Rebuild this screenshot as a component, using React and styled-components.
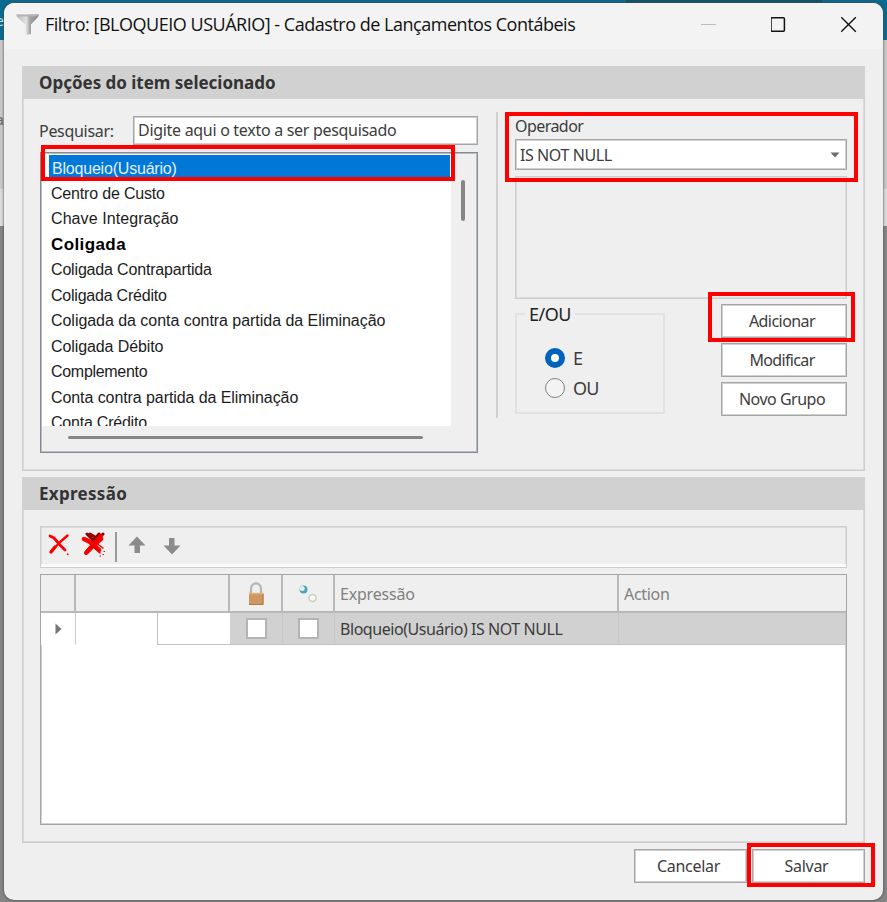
import React, { Component } from 'react'
import styled, { createGlobalStyle } from 'styled-components';


const GlobalStyle = createGlobalStyle`
    * {
        box-sizing: border-box;
    }
    body {
        margin: 0;
        overflow: hidden;
        font-family: "Noto Sans", sans-serif;
        font-size: 16px;
        color: #3c3c3c;
    }
`;

const Desktop = styled.div`
    position: relative;
    width: 887px;
    height: 902px;
    padding: 3px 4px 2px;
    overflow: hidden;
    background:
        linear-gradient(#14536c, #14536c) 626px 0 / 196px 3px no-repeat,
        linear-gradient(#0b6a90 0 40px, #c9c9c9 40px 189px, #dcdcdc 189px 226px, #858585 226px);
`;

// ends of the labels on the page behind the dialog
const BehindText = styled.span`
    position: absolute;
    right: 883px;
    top: ${props => props.$top}px;
    font-size: 15px;
    line-height: 18px;
    color: ${props => props.$color};
`;

const Window = styled.div`
    position: relative;
    width: 879px;
    height: 897px;
    border-radius: 10px;
    background: #efefef;
    box-shadow: 0 0 2px 1px rgba(70, 70, 70, 0.5);
`;

const TitleBar = styled.div`
    height: 46px;
    display: flex;
    align-items: center;
    padding: 0 26px 3px 12px;
    border-radius: 10px 10px 0 0;
    background: #f3f3f3;
`;

const Title = styled.p`
    flex: 1;
    margin: -1px 0 0 5px;
    white-space: nowrap;
    font-family: "Open Sans", sans-serif;
    font-size: 18px;
    color: #111111;
`;

const Text = styled.span`
    display: inline-block;
    white-space: nowrap;
    letter-spacing: ${props => props.$track || 0}px;
`;

const WindowControls = styled.div`
    display: flex;
    gap: 55px;
`;

const Panel = styled.div`
    width: 843px;
    height: ${props => props.$height}px;
    margin: ${props => props.$top}px 0 0 18px;
    padding: 0 1px 1px;
    border: 1px solid #cecece;
    border-top: none;
    box-shadow: inset 0 0 0 1px #dadada;
`;

const PanelHeader = styled.div`
    height: 33px;
    margin: 0 -2px;
    padding-left: 17px;
    line-height: 33px;
    background: #d1d1d1;
    font-weight: bold;
    font-size: 17px;
    color: #333333;
`;

const OptionsBody = styled.div`
    display: flex;
    padding: 13px 16px 0;
`;

const SearchColumn = styled.div`
    width: 438px;
    padding-top: 4px;
`;

const SearchRow = styled.div`
    display: flex;
    justify-content: space-between;
    align-items: center;
    height: 29px;
    margin-left: -1px;
`;

const SearchInput = styled.div`
    width: 345px;
    height: 29px;
    padding-left: 4px;
    line-height: 27px;
    border: 1px solid #a5a5a5;
    box-shadow: inset 0 0 0 1px #d0d0d0;
    background: #ffffff;
`;

const ListBox = styled.div`
    display: grid;
    grid-template-columns: 409px 1fr;
    grid-template-rows: 272px 1fr;
    width: 438px;
    height: 301px;
    margin-top: 7px;
    border: 1px solid #848a92;
    box-shadow: inset 0 0 0 1px #b9bdc2;
    padding: 1px;
`;

const ListItems = styled.div`
    overflow: hidden;
    background: #ffffff;
    padding: 1px 0 0 1px;
    font-family: "Liberation Sans", sans-serif;
    color: #1c1c1c;
`;

const ListItem = styled.div`
    height: 25.5px;
    line-height: ${props => props.$selected ? 27 : 26}px;
    margin: 0 1px 0 ${props => props.$selected ? 6 : 0}px;
    padding-left: ${props => props.$selected ? 3 : 8}px;
    font-weight: ${props => props.$bold ? 'bold' : 'normal'};
    font-size: ${props => props.$bold ? 17 : 16}px;
    background: ${props => props.$selected ? '#0078d7' : 'transparent'};
    color: ${props => props.$selected ? '#e4effb' : props.$bold ? '#000000' : '#1c1c1c'};
`;

const VerticalTrack = styled.div`
    padding: 26px 0 0 10px;
`;

const HorizontalTrack = styled.div`
    padding: 10px 0 0 26px;
`;

const Thumb = styled.div`
    width: ${props => props.$width}px;
    height: ${props => props.$height}px;
    border-radius: 2px;
    background: #868686;
`;

const ColumnDivider = styled.div`
    width: 2px;
    height: 306px;
    margin: 0 17px 0 18px;
    background: #d0d0d0;
`;

const OperatorColumn = styled.div`
    width: 332px;
`;

const OperatorLabel = styled.div`
    height: 27px;
    line-height: 29px;
`;

const Select = styled.div`
    display: flex;
    align-items: center;
    justify-content: space-between;
    height: 31px;
    padding: 0 6px 0 4px;
    border: 1px solid #a5a5a5;
    box-shadow: inset 0 0 0 1px #d0d0d0;
    background: #ffffff;
`;

const ValueBox = styled.div`
    height: 123px;
    margin-top: 6px;
    border: 1px solid #cecece;
    box-shadow: inset 0 0 0 1px #dcdcdc;
`;

const OperatorActions = styled.div`
    display: flex;
    justify-content: space-between;
    padding-top: 5px;
`;

const Group = styled.fieldset`
    width: 150px;
    height: 112px;
    margin: -2px 0 0;
    padding: 17px 0 0 28px;
    border: 2px solid #e2e2e2;
`;

const GroupTitle = styled.legend`
    margin-left: -20px;
    padding: 0 4px;
    line-height: 24px;
    font-size: 18px;
    color: #222222;
`;

const RadioRow = styled.div`
    display: flex;
    align-items: center;
    gap: 8px;
    height: 30px;
    font-size: 18px;
`;

const Radio = styled.div`
    width: 20px;
    height: 20px;
    border-radius: 50%;
    border: ${props => props.$checked ? '6px solid #0062bd' : '1.5px solid #808080'};
    background: ${props => props.$checked ? '#ffffff' : '#f3f3f3'};
`;

const ButtonStack = styled.div`
    display: flex;
    flex-direction: column;
    gap: 5px;
`;

const Button = styled.div`
    width: ${props => props.$width || 126}px;
    height: 34px;
    padding-right: 4px;
    line-height: 33px;
    border: 1px solid #a5a5a5;
    box-shadow: inset 0 0 0 1px #d0d0d0;
    background: #ffffff;
    text-align: center;
`;

const Toolbar = styled.div`
    display: flex;
    width: 807px;
    height: 42px;
    margin: 16px 0 0 16px;
    padding: 4px 7px;
    border: 1px solid #cecece;
    box-shadow: inset 0 -3px 0 #f9fafc, inset 0 0 0 1px #dcdcdc;
`;

const Grid = styled.div`
    width: 807px;
    height: 251px;
    margin: 6px 0 0 16px;
    border: 1px solid #a5a5a5;
    box-shadow: inset 0 0 0 1px #d0d0d0;
    background: #ffffff;
`;

const GridRow = styled.div`
    display: grid;
    grid-template-columns: 35px 154px 53px 52px 284px 1fr;
    height: ${props => props.$header ? 38 : 32}px;
`;

const HeaderCell = styled.div`
    display: flex;
    align-items: center;
    justify-content: ${props => props.$center ? 'center' : 'flex-start'};
    padding-top: 2px;
    padding-left: ${props => props.$center ? 0 : 5}px;
    border-right: ${props => props.$last ? 0 : 2}px solid #b8b8b8;
    border-bottom: 2px solid #b8b8b8;
    background: #efefef;
    color: #808080;
`;

const Cell = styled.div`
    display: flex;
    align-items: center;
    justify-content: ${props => props.$center ? 'center' : 'flex-start'};
    padding-left: ${props => props.$center ? 0 : 5}px;
    border-right: 1px solid #c8c8c8;
    border-bottom: 1px solid ${props => props.$blank ? '#ffffff' : '#c4c4c4'};
    background: ${props => props.$blank ? '#ffffff' : '#d1d1d1'};
`;

const RedactedCell = styled.div`
    display: flex;
    background: #ffffff;
`;

const RedactedPart = styled.div`
    width: 82px;
    border-right: 1px solid #c0c0c0;
`;

const RedactedRest = styled.div`
    flex: 1;
    border-bottom: 1px solid #c4c4c4;
`;

const Checkbox = styled.div`
    width: 21px;
    height: 21px;
    border: 2px solid #b4b4b4;
    background: #ffffff;
`;

const Footer = styled.div`
    display: flex;
    justify-content: flex-end;
    gap: 5px;
    padding: 6px 18px 0 0;
`;

// red frames drawn over the dialog
const Highlight = styled.div`
    position: absolute;
    left: ${props => props.$left}px;
    top: ${props => props.$top}px;
    width: ${props => props.$width}px;
    height: ${props => props.$height}px;
    border: 4px solid #ff0000;
`;

const fields = [
    { name: 'Bloqueio(Usuário)', selected: true, track: -0.2 },
    { name: 'Centro de Custo', track: -0.18 },
    { name: 'Chave Integração', track: 0.08 },
    { name: 'Coligada', bold: true, track: 0.4 },
    { name: 'Coligada Contrapartida', track: -0.17 },
    { name: 'Coligada Crédito', track: -0.22 },
    { name: 'Coligada da conta contra partida da Eliminação', track: -0.04 },
    { name: 'Coligada Débito', track: -0.1 },
    { name: 'Complemento', track: -0.3 },
    { name: 'Conta contra partida da Eliminação', track: -0.08 },
    { name: 'Conta Crédito', track: -0.22 },
];

const FunnelIcon = () => (
    <svg width="24" height="22" viewBox="0 0 24 22">
        <defs>
            <linearGradient id="funnel">
                <stop offset="0" stopColor="#b5b5b5" />
                <stop offset="0.45" stopColor="#e2e2e2" />
                <stop offset="0.6" stopColor="#a6a6a6" />
                <stop offset="1" stopColor="#858585" />
            </linearGradient>
        </defs>
        <path d="M0 0.500H23L22 3L15 10.500V20L9.500 21V10.500L1 3Z" fill="url(#funnel)" />
        <path d="M0.500 0.500H22.500L20 2.500H3Z" fill="#b4b4b4" />
    </svg>
);

const DeleteIcon = () => (
    <svg width="22" height="22" viewBox="0 0 22 22" fill="none" stroke="#ff0000" strokeLinecap="round">
        <path d="M2 2L6 4L12 11L17 16" strokeWidth="2.800" />
        <path d="M19.500 1.500L12 8L3 18" strokeWidth="2.400" />
        <path d="M3 18L7 13" strokeWidth="3.400" />
        <path d="M19.500 20L20 20.500" strokeWidth="1.500" />
    </svg>
);

const DeleteAllIcon = () => (
    <svg width="26" height="26" viewBox="0 0 26 26" fill="none" strokeLinecap="round">
        <path d="M6 2L14 10M22 2L15 9M9 2L14 5M18 2L12 9" stroke="#8f0000" strokeWidth="3" />
        <path d="M3 7L9 10L18 18M20 7L14 12L6 20" stroke="#ff0000" strokeWidth="4.500" />
        <path d="M5 21L14 10L20 4" stroke="#f00000" strokeWidth="4" />
        <path d="M15 11L22 16M12 14L19 21" stroke="#e00000" strokeWidth="1.500" />
        <path d="M19 24L19.500 24M23 19.500L23.500 19.500M22 22.500H22.500" stroke="#d00000" strokeWidth="1.200" />
    </svg>
);

const ArrowIcon = ({ down }) => (
    <svg width="18" height="18" viewBox="0 0 18 18">
        <path d="M9 0.500L17.500 9.500H12V17H6.500V9.500H0.500Z" fill="#8c8c8c" transform={down ? 'rotate(180 9 9)' : undefined} />
    </svg>
);

const LockIcon = () => (
    <svg width="18" height="26" viewBox="0 0 18 26">
        <path d="M4 13V8C4 0.500 14 0.500 14 8V13" fill="none" stroke="#b5b5b5" strokeWidth="2.200" />
        <rect x="2" y="12" width="14.500" height="12" fill="#cf9862" />
        <path d="M2 12.500H16.500" stroke="#d9b47c" strokeWidth="1.500" />
        <path d="M16 13V23.500H2" fill="none" stroke="#a97b3c" strokeWidth="1" />
    </svg>
);

const DotsIcon = () => (
    <svg width="20" height="20" viewBox="0 0 20 20">
        <circle cx="5.500" cy="5.500" r="4" fill="#4fa5b8" />
        <circle cx="4.200" cy="4.500" r="2.500" fill="#e2eeee" />
        <circle cx="14.500" cy="14" r="3.500" fill="#f8f9f2" stroke="#cbccc0" strokeWidth="1.500" />
    </svg>
);

const ToolbarItem = styled.div`
    margin: ${props => props.$top}px 0 0 ${props => props.$left}px;
`;

const ToolbarDivider = styled.div`
    width: 2px;
    height: 30px;
    margin: 1px 0 0 8px;
    background: #9a9a9a;
`;

export default class App extends Component {
    render() {
        return (
            <>
            <GlobalStyle />
            <Desktop>
                <BehindText $top={11} $color="#cfe3ec">e</BehindText>
                <BehindText $top={110} $color="#6b6258">a</BehindText>
                <Window>
                    <TitleBar>
                        <FunnelIcon />
                        <Title><Text $track={-0.48}>Filtro: [BLOQUEIO USUÁRIO] - Cadastro de Lançamentos Contábeis</Text></Title>
                        <WindowControls>
                            <svg width="15" height="16" viewBox="0 0 15 16"><path d="M0 7.500H15" stroke="#bdbdbd" /></svg>
                            <svg width="15" height="16" viewBox="0 0 15 16"><rect x="0" y="0.800" width="13.400" height="13.400" rx="1" fill="none" stroke="#111111" strokeWidth="1.500" /></svg>
                            <svg width="16" height="16" viewBox="0 0 16 16"><path d="M0.200 0.200L14.800 14.800M14.800 0.200L0.200 14.800" stroke="#111111" strokeWidth="1.400" /></svg>
                        </WindowControls>
                    </TitleBar>
                    <Panel $top={17} $height={405}>
                        <PanelHeader><Text $track={-0.02}>Opções do item selecionado</Text></PanelHeader>
                        <OptionsBody>
                            <SearchColumn>
                                <SearchRow>
                                    <Text $track={-0.3}>Pesquisar:</Text>
                                    <SearchInput><Text $track={-0.3}>Digite aqui o texto a ser pesquisado</Text></SearchInput>
                                </SearchRow>
                                <ListBox>
                                    <ListItems>
                                        {fields.map(field => (
                                            <ListItem key={field.name} $selected={field.selected} $bold={field.bold}>
                                                <Text $track={field.track}>{field.name}</Text>
                                            </ListItem>
                                        ))}
                                    </ListItems>
                                    <VerticalTrack><Thumb $width={4} $height={41} /></VerticalTrack>
                                    <HorizontalTrack><Thumb $width={355} $height={3} /></HorizontalTrack>
                                </ListBox>
                            </SearchColumn>
                            <ColumnDivider />
                            <OperatorColumn>
                                <OperatorLabel><Text $track={-0.55}>Operador</Text></OperatorLabel>
                                <Select>
                                    <Text $track={-0.42}>IS NOT NULL</Text>
                                    <svg width="10" height="6" viewBox="0 0 10 6"><path d="M0.500 0.500H9.500L5 5.500Z" fill="#6c6c6c" /></svg>
                                </Select>
                                <ValueBox />
                                <OperatorActions>
                                    <Group>
                                        <GroupTitle><Text $track={-0.5}>E/OU</Text></GroupTitle>
                                        <RadioRow><Radio $checked />E</RadioRow>
                                        <RadioRow><Radio /><Text $track={-0.8}>OU</Text></RadioRow>
                                    </Group>
                                    <ButtonStack>
                                        <Button><Text $track={-0.55}>Adicionar</Text></Button>
                                        <Button><Text $track={-0.65}>Modificar</Text></Button>
                                        <Button><Text $track={-0.5}>Novo Grupo</Text></Button>
                                    </ButtonStack>
                                </OperatorActions>
                            </OperatorColumn>
                        </OptionsBody>
                    </Panel>
                    <Panel $top={6} $height={366}>
                        <PanelHeader><Text $track={0.3}>Expressão</Text></PanelHeader>
                        <Toolbar>
                            <ToolbarItem $top={3} $left={0}><DeleteIcon /></ToolbarItem>
                            <ToolbarItem $top={1} $left={11}><DeleteAllIcon /></ToolbarItem>
                            <ToolbarDivider />
                            <ToolbarItem $top={5} $left={11}><ArrowIcon /></ToolbarItem>
                            <ToolbarItem $top={6} $left={17}><ArrowIcon down /></ToolbarItem>
                        </Toolbar>
                        <Grid>
                            <GridRow $header>
                                <HeaderCell />
                                <HeaderCell />
                                <HeaderCell $center><LockIcon /></HeaderCell>
                                <HeaderCell $center><DotsIcon /></HeaderCell>
                                <HeaderCell><Text $track={-0.2}>Expressão</Text></HeaderCell>
                                <HeaderCell $last><Text $track={-0.3}>Action</Text></HeaderCell>
                            </GridRow>
                            <GridRow>
                                <Cell $center $blank>
                                    <svg width="7" height="12" viewBox="0 0 7 12"><path d="M0.500 0.500L6.500 6L0.500 11.500Z" fill="#777777" /></svg>
                                </Cell>
                                <RedactedCell>
                                    <RedactedPart />
                                    <RedactedRest />
                                </RedactedCell>
                                <Cell $center><Checkbox /></Cell>
                                <Cell $center><Checkbox /></Cell>
                                <Cell><Text $track={-0.45}>Bloqueio(Usuário) IS NOT NULL</Text></Cell>
                                <Cell />
                            </GridRow>
                        </Grid>
                    </Panel>
                    <Footer>
                        <Button $width={113}><Text $track={-0.3}>Cancelar</Text></Button>
                        <Button $width={113}><Text $track={-0.3}>Salvar</Text></Button>
                    </Footer>
                    <Highlight $left={37} $top={142} $width={414} $height={36} />
                    <Highlight $left={501} $top={109} $width={353} $height={70} />
                    <Highlight $left={704} $top={289} $width={147} $height={50} />
                    <Highlight $left={743} $top={840} $width={128} $height={44} />
                </Window>
            </Desktop>
            </>
        )
    }
}
